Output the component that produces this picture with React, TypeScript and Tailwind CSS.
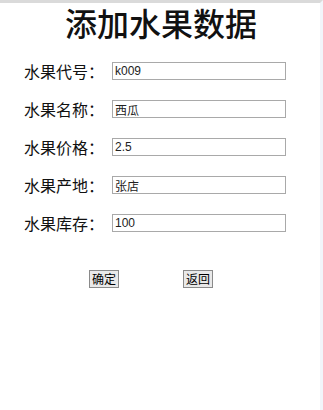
const rows = [
  { label: "水果代号：", value: "k009" },
  { label: "水果名称：", value: "西瓜" },
  { label: "水果价格：", value: "2.5" },
  { label: "水果产地：", value: "张店" },
  { label: "水果库存：", value: "100" },
];

const cjk = '"Noto Sans CJK SC", "Liberation Sans", sans-serif';

export default function App() {
  return (
    <div
      className="flex h-[410px] w-[323px] flex-col border-t-[3px] border-r-[3px] border-t-[#dadada] border-r-[#f2f5fa] bg-white text-black"
      style={{ fontFamily: cjk }}
    >
      <h1 className="mt-[1px] pl-[2px] text-center text-[32px] font-medium leading-[36px] text-[#111]">
        添加水果数据
      </h1>

      <form className="mt-[22px] flex flex-col gap-[20px] pl-[24px]">
        {rows.map((r) => (
          <div key={r.label} className="flex h-[18px] items-center">
            <label className="w-[88px] text-[16px] font-normal leading-[18px] text-[#111]">
              {r.label}
            </label>
            <input
              defaultValue={r.value}
              className="h-[18px] w-[174px] border border-[#a9a9a9] px-[2px] text-[12px] leading-[16px] text-[#222] outline-none"
              style={{ fontFamily: '"Liberation Sans", "Noto Sans CJK SC", sans-serif' }}
            />
          </div>
        ))}
      </form>

      <div className="mt-[38px] flex pl-[89px]">
        <button
          type="button"
          className="h-[18px] w-[30px] border border-[#8a8a8a] bg-[#e9e9e9] text-[12px] leading-[16px]"
        >
          确定
        </button>
        <button
          type="button"
          className="ml-[64px] h-[18px] w-[30px] border border-[#8a8a8a] bg-[#e9e9e9] text-[12px] leading-[16px]"
        >
          返回
        </button>
      </div>
    </div>
  );
}
